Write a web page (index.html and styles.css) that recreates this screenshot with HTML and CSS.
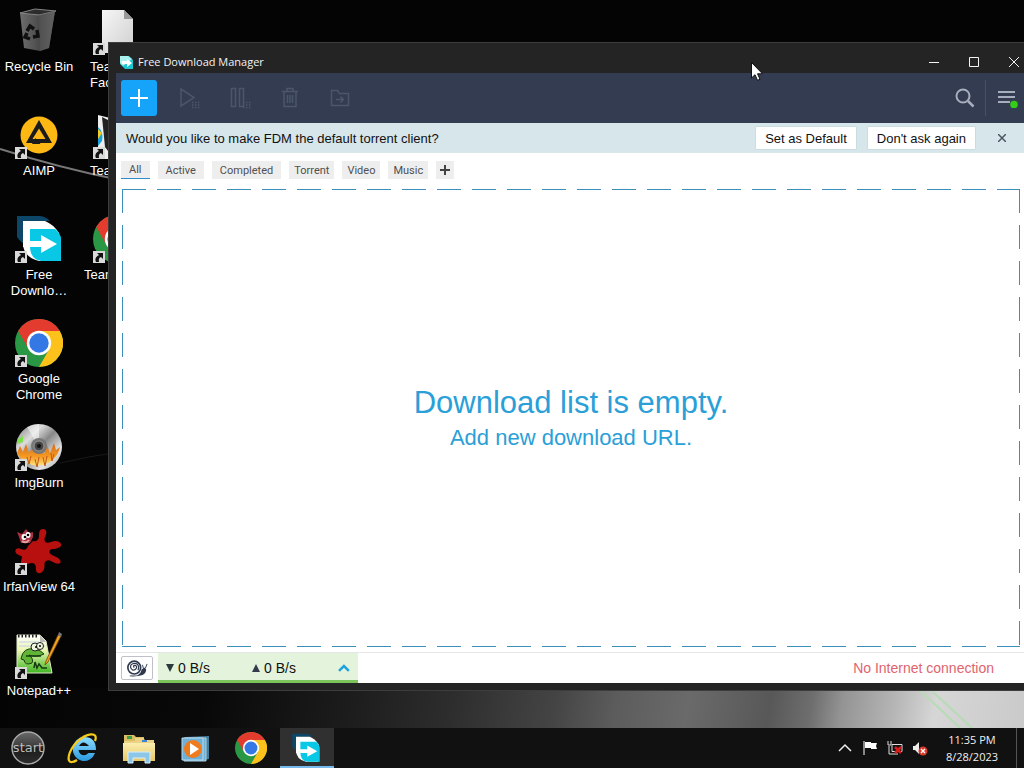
FILE: index.html
```html
<!DOCTYPE html>
<html lang="en">
<head>
<meta charset="utf-8">
<meta name="viewport" content="width=device-width, initial-scale=1">
<title>Free Download Manager</title>
<link rel="stylesheet" href="styles.css">
</head>
<body>
<svg class="defs" aria-hidden="true">
  <defs>
    <linearGradient id="g-bin" x1="0" y1="0" x2="1" y2="0"><stop offset="0" stop-color="#6e6e6e"/><stop offset=".55" stop-color="#4a4a4a"/><stop offset="1" stop-color="#767676"/></linearGradient>
    <linearGradient id="g-file" x1="0" y1="0" x2="1" y2="1"><stop offset="0" stop-color="#f6f6f6"/><stop offset="1" stop-color="#cfcfcf"/></linearGradient>
    <linearGradient id="g-disc" x1="0" y1="0" x2="1" y2="1"><stop offset="0" stop-color="#777"/><stop offset=".3" stop-color="#ddd"/><stop offset=".5" stop-color="#888"/><stop offset=".75" stop-color="#e4e4e4"/><stop offset="1" stop-color="#999"/></linearGradient>
    <linearGradient id="g-fire" x1="0" y1="0" x2="0" y2="1"><stop offset="0" stop-color="#d2691e"/><stop offset=".6" stop-color="#f59a22"/><stop offset="1" stop-color="#ffe27a"/></linearGradient>
    <linearGradient id="g-note" x1="0" y1="0" x2="0" y2="1"><stop offset="0" stop-color="#fff"/><stop offset=".4" stop-color="#eaf6b0"/><stop offset="1" stop-color="#3fb522"/></linearGradient>
    <linearGradient id="g-ie" x1="0" y1="0" x2="0" y2="1"><stop offset="0" stop-color="#8fdcff"/><stop offset="1" stop-color="#2a9be0"/></linearGradient>
    <linearGradient id="g-folder" x1="0" y1="0" x2="0" y2="1"><stop offset="0" stop-color="#fbeeb0"/><stop offset="1" stop-color="#e6c765"/></linearGradient>
    <linearGradient id="g-start" x1="0" y1="0" x2="0" y2="1"><stop offset="0" stop-color="#6a6a6a"/><stop offset=".45" stop-color="#3c3c3c"/><stop offset=".5" stop-color="#1c1c1c"/><stop offset="1" stop-color="#2c2c2c"/></linearGradient>
    <symbol id="shortcut" viewBox="0 0 12 12"><rect width="12" height="12" fill="#d9d9d9"/><path d="M4 2h6v6L8 6C6 7 5.500 8 6 11H3C1.500 8 3 5.500 6 4z" fill="#111"/></symbol>
    <symbol id="fdm" viewBox="0 0 48 48">
      <path d="M2 1h22q6 0 11 5H12v24q-5-1-10-8z" fill="#0c4668"/>
      <path d="M8 6h22q8 3 14 12v28H24Q8 42 8 28z" fill="#fff"/>
      <path d="M15 14h25q6 5 6 10v22H26q-11-2-11-15z" fill="#08c8e6"/>
      <path d="M8 26h18v-6l16 9-16 9v-6H8z" fill="#fff"/>
    </symbol>
    <symbol id="chrome" viewBox="0 0 48 48">
      <circle cx="24" cy="24" r="24" fill="#2a9745"/>
      <path d="M3.200 12A24 24 0 0 1 44.800 12H24L13.600 30z" fill="#e33b2e"/>
      <path d="M44.800 12A24 24 0 0 1 24 48L34.400 30 24 12z" fill="#fcc21b"/>
      <circle cx="24" cy="24" r="12.200" fill="#fff"/><circle cx="24" cy="24" r="9.700" fill="#3478e5"/>
    </symbol>
  </defs>
</svg>

<main class="desktop">
  <svg class="wallpaper" viewBox="0 0 1024 728" preserveAspectRatio="none" aria-hidden="true">
    <path d="M0 149Q60 168 120 180" fill="none" stroke="#777" stroke-width="2"/>
    <path d="M60 463Q90 456 120 452" fill="none" stroke="#181818"/>
    <path d="M921 691L960 728M932 691L972 728" stroke="#b7dcb5" stroke-width="2"/>
  </svg>

  <nav class="icons" aria-label="Desktop">
    <a class="icon" href="#bin">
      <svg viewBox="0 0 48 48"><path d="M5 6l35-2-6 37-9 3-16-3z" fill="url(#g-bin)"/><path d="M5 6l15-4 21 2-17 4z" fill="#2d2d2d" stroke="#858585"/><path d="M24 8l1 36 9-3 6-37z" fill="#555" opacity=".6"/><g fill="none" stroke="#111" stroke-width="3.500"><path d="M12 24l3-5 4 3"/><path d="M22 23l1 6-5 1"/><path d="M15 32l-5-2 2-4"/></g></svg>
      <span>Recycle Bin</span>
    </a>
    <a class="icon" href="#aimp">
      <svg viewBox="0 0 48 48"><circle cx="24" cy="24" r="18.500" fill="#fdb813"/><path fill-rule="evenodd" d="M24 9l13 23H11zm0 8.500l-6.500 10.500H22l4 0h4.500z" fill="#1b1b1b"/><path d="M17 33l3.500-6 5 6z" fill="#1b1b1b"/><use href="#shortcut" y="36" width="12" height="12"/></svg>
      <span>AIMP</span>
    </a>
    <a class="icon" href="#fdm-app">
      <svg viewBox="0 0 48 48"><use href="#fdm" width="48" height="48"/><use href="#shortcut" y="36" width="12" height="12"/></svg>
      <span>Free<br>Downlo…</span>
    </a>
    <a class="icon" href="#chrome-app">
      <svg viewBox="0 0 48 48"><use href="#chrome" width="48" height="48"/><use href="#shortcut" y="36" width="12" height="12"/></svg>
      <span>Google<br>Chrome</span>
    </a>
    <a class="icon" href="#imgburn">
      <svg viewBox="0 0 48 48"><circle cx="24" cy="24" r="23" fill="url(#g-disc)"/><path d="M24 24L12 4A23 23 0 0 1 24 1z" fill="#fff" opacity=".5"/><path d="M2 17l6-4v6l-6 2z" fill="#7be04a"/><path d="M2 30l3-7 3 6 3-8 3 9 4-6 3 7 4-8 4 8 3-9 3 8 4-10 2 7 4-3A23 23 0 0 1 2 30z" fill="url(#g-fire)"/><path d="M12 34l2 7 2-8M20 36l2 8 2-10M28 34l2 9 2-10M36 30l1 8 2-7" fill="none" stroke="#c0561a"/><circle cx="24" cy="23" r="8" fill="#777"/><circle cx="24" cy="23" r="5" fill="#444" stroke="#999"/><circle cx="24" cy="23" r="2" fill="#111"/><use href="#shortcut" y="36" width="12" height="12"/></svg>
      <span>ImgBurn</span>
    </a>
    <a class="icon" href="#irfanview">
      <svg viewBox="0 0 48 48"><path d="M18 14q5 1 6-4c0-4 0-8 4-8s4 4 2 8c-2 5 2 7 6 5s9-1 10 2-4 5-8 5-5 4-1 6 6 2 8 5-1 5-5 3-6-4-9-2 0 6-3 10-7 2-7-1 0-7-4-7-5 3-9 2-1-6-1-8-4-1-6-4 1-6 5-4 6 0 7-3z" fill="#b80f0f"/><path d="M2 5l5 2 4-5 3 4 4-1v5l-3 6H6L4 10z" fill="#a83040"/><ellipse cx="9" cy="10" rx="2.500" ry="3" fill="#fff"/><ellipse cx="13" cy="8" rx="2.500" ry="3" fill="#fff"/><circle cx="10" cy="10" r="1.300"/><circle cx="13" cy="8" r="1.300"/><path d="M7 14q4 3 7-1" stroke="#e8a0a0" stroke-width="2" fill="none"/><use href="#shortcut" y="36" width="12" height="12"/></svg>
      <span>IrfanView 64</span>
    </a>
    <a class="icon" href="#notepad">
      <svg viewBox="0 0 48 48"><path d="M2 4h23l6 6 6 32H2z" fill="url(#g-note)" stroke="#dfe8c8"/><path d="M3 5h21" stroke="#222" stroke-width="3" stroke-dasharray="1.500 2"/><path d="M25 4v7h6z" fill="#bbb"/><path d="M4 11h20M4 15h26" stroke="#c4cfe8"/><path d="M6 28q2-12 13-10 7 1 10 5-8 4-15 1 5 4 3 8-7 3-8-3z" fill="#62b436" stroke="#183f12"/><circle cx="20" cy="16" r="4" fill="#eef7dd" stroke="#222"/><circle cx="25" cy="15" r="3.500" fill="#eef7dd" stroke="#222"/><circle cx="21" cy="16" r="1"/><circle cx="25" cy="15" r="1"/><path d="M11 25h15M19 37l1-6 2 6 2-4 3 4h5" fill="none" stroke="#153c10" stroke-width="1.500"/><path d="M43 4l3 1-13 26-3 3 1-4z" fill="#eba51e" stroke="#7c430a" stroke-width=".8"/><path d="M44 1l3 2-1 3-3-2z" fill="#777"/><use href="#shortcut" y="36" width="12" height="12"/></svg>
      <span>Notepad++</span>
    </a>
    <a class="icon second" href="#file-1">
      <svg viewBox="0 0 48 48"><path d="M9 3h22l9 9v34H9z" fill="url(#g-file)"/><path d="M31 3v9h9z" fill="#999"/><use href="#shortcut" y="36" width="12" height="12"/></svg>
      <span>Tea<br>Fac</span>
    </a>
    <a class="icon second" href="#file-2">
      <svg viewBox="0 0 48 48"><path d="M5 4l16 4v40H5z" fill="#eee"/><path d="M9 6l12 6v36l-9-12z" fill="#222"/><path d="M5 16q6 5 4 14l-4 5z" fill="#19a5dc"/><path d="M5 18l4 4-4 6z" fill="#f4ce28"/><use href="#shortcut" y="36" width="12" height="12"/></svg>
      <span>Tea</span>
    </a>
    <a class="icon second long" href="#file-3">
      <svg viewBox="0 0 48 48"><use href="#chrome" width="48" height="48"/><use href="#shortcut" y="36" width="12" height="12"/></svg>
      <span>Team</span>
    </a>
  </nav>

  <section class="window" aria-label="Free Download Manager">
    <header class="titlebar">
      <svg class="appicon" viewBox="0 0 14 14"><path d="M0 1h9l4 4v9H5L0 9z" fill="#1fc6cf"/><path d="M0 1h8l4 3-9 7-3-3z" fill="#a8f1ee"/><path d="M2 6h5V4l5 4-5 4V9H2z" fill="#fff"/></svg>
      <h1>Free Download Manager</h1>
      <div class="controls">
        <button aria-label="Minimize"><svg viewBox="0 0 12 12"><path d="M1 6.500h10" /></svg></button>
        <button aria-label="Maximize"><svg viewBox="0 0 12 12"><path d="M1.500 1.500h9v9h-9z"/></svg></button>
        <button aria-label="Close"><svg viewBox="0 0 12 12"><path d="M1 1l10 10M11 1L1 11"/></svg></button>
      </div>
    </header>

    <div class="client">
      <div class="toolbar">
        <button class="add" aria-label="Add download"><svg viewBox="0 0 18 18"><path d="M9 0v18M0 9h18" stroke="#fff" stroke-width="2"/></svg></button>
        <div class="actions">
          <button aria-label="Start all"><svg viewBox="0 0 22 22"><path d="M2 2l13 8.500L2 19z"/><path d="M13 15.500h8M13 18h8M13 20.500h8" stroke-width="1.500" stroke-dasharray="1.500 1.500"/></svg></button>
          <button aria-label="Pause all"><svg viewBox="0 0 22 22"><path d="M2.500 1.500h4v18h-4zM10.500 1.500h4v18h-4z"/><path d="M14 15.500h8M14 18h8M14 20.500h8" stroke-width="1.500" stroke-dasharray="1.500 1.500"/></svg></button>
          <button aria-label="Delete"><svg viewBox="0 0 22 22"><path d="M3 4.500h16M8 4V1.500h6V4M5 5v14.500h12V5M8.500 8v8M11 8v8M13.500 8v8"/></svg></button>
          <button aria-label="Move to folder"><svg viewBox="0 0 22 22"><path d="M2.500 3.500h6l2 3h9v12h-17zM7 12.500h7M11.500 9.500l3 3-3 3"/></svg></button>
        </div>
        <button class="search" aria-label="Search"><svg viewBox="0 0 20 20"><circle cx="8" cy="8" r="6.500"/><path d="M13 13l5.500 5.500" stroke-width="2.500"/></svg></button>
        <button class="menu" aria-label="Menu"><svg viewBox="0 0 20 20"><path d="M0 4h17M0 9h17M0 14h12"/><circle cx="16" cy="16.500" r="3.800" fill="#34cb19" stroke="none"/></svg></button>
      </div>

      <div class="banner">
        <p>Would you like to make FDM the default torrent client?</p>
        <button class="choice">Set as Default</button>
        <button class="choice">Don't ask again</button>
        <button class="dismiss" aria-label="Close message"><svg viewBox="0 0 8 8"><path d="M0 0l8 8M8 0L0 8"/></svg></button>
      </div>

      <nav class="filters" aria-label="Filters">
        <button class="state on">All</button>
        <button class="state">Active</button>
        <button class="state">Completed</button>
        <button>Torrent</button>
        <button>Video</button>
        <button>Music</button>
        <button class="plus" aria-label="Add filter"><svg viewBox="0 0 10 10"><path d="M5 0v10M0 5h10" stroke="#444" stroke-width="2"/></svg></button>
      </nav>

      <div class="dropzone">
        <h2>Download list is empty.</h2>
        <a href="#add">Add new download URL.</a>
      </div>

      <footer class="status">
        <button class="snail" aria-label="Snail mode"><svg viewBox="0 0 24 18"><path d="M4 17.500q9 .5 14-1.500 4-2 4-6l-2-2-3 2q-1 5-5 6.500H4z" fill="#30384e"/><path d="M19 9l-1-4M21 9l2-5" stroke="#30384e" fill="none"/><circle cx="9" cy="8" r="7" fill="none" stroke="#30384e" stroke-width="1.800"/><path d="M9 8q-1.500-1.500 0-2.500 3 0 2.500 3-1.500 3-4.500 2-3-2-1.500-5.500Q8 2.500 12 4q3 3 1 7" fill="none" stroke="#30384e" stroke-width="1.300"/></svg></button>
        <button class="speed" aria-label="Speed, down 0 B/s, up 0 B/s">
          <span><svg viewBox="0 0 8 8"><path d="M0 0h8L4 8z" fill="#2b3a3c"/></svg>0 B/s</span>
          <span><svg viewBox="0 0 8 8"><path d="M0 8h8L4 0z" fill="#343a4c"/></svg>0 B/s</span>
          <svg class="chev" viewBox="0 0 12 8"><path d="M1 7l5-5 5 5" fill="none" stroke="#1fa2e0" stroke-width="2.500"/></svg>
        </button>
        <p>No Internet connection</p>
      </footer>
    </div>
  </section>

  <svg class="cursor" viewBox="0 0 12 19" aria-hidden="true"><path d="M.5.5v15.500l3.500-3.300 2.500 5.600 2.500-1-2.500-5.500h5z" fill="#fff" stroke="#111"/></svg>
</main>

<footer class="taskbar">
  <button class="start" aria-label="Start"><svg viewBox="0 0 36 36"><circle cx="18" cy="18" r="16" fill="url(#g-start)" stroke="#a8a8a8" stroke-width="1.500"/><text x="18" y="22" text-anchor="middle">start</text></svg></button>
  <nav class="apps" aria-label="Taskbar">
    <button aria-label="Internet Explorer"><svg viewBox="0 0 32 32"><path d="M17 5a11.500 12 0 1 0 11 16h-6.500q-4 4-8 1-2-2-2-4H29Q29 5 17 5zm-5 9q4-7 10 0z" fill="url(#g-ie)" fill-rule="evenodd"/><path d="M28 9C32-1 19 1 10 10S-1 31 5 30q2 0 5-2" fill="none" stroke="#f4ca1c" stroke-width="2.200"/></svg></button>
    <button aria-label="File Explorer"><svg viewBox="0 0 32 32"><path d="M1 3h10l2 2h8v6H1z" fill="#d9bd63"/><path d="M4 4h5v3H4z" fill="#3b9e48"/><path d="M12 6h8l2 2h9v20H1V9h11z" fill="#ecd284"/><path d="M19 8h5v2h-5z" fill="#3e85d6"/><path d="M0 11h32v18H0z" fill="url(#g-folder)"/><path d="M5 31V20h22v11h-5v-5H10v5z" fill="#8dc6e6" stroke="#d6effa"/></svg></button>
    <button aria-label="Media Player"><svg viewBox="0 0 32 32"><path d="M6 5l24-1v23l-8 2z" fill="#487e9d"/><path d="M5 6h22v23H5z" fill="#75b2d0" stroke="#aad2e4"/><path d="M3 6h21v22H3z" fill="#6fb0d8" stroke="#b6dcf0"/><circle cx="14" cy="17" r="9" fill="#f07b1c"/><path d="M11 11l9 6-9 6z" fill="#fff"/></svg></button>
    <button aria-label="Google Chrome"><svg viewBox="0 0 32 32"><use href="#chrome" width="32" height="32"/></svg></button>
    <button class="running" aria-label="Free Download Manager"><svg viewBox="0 0 32 32"><use href="#fdm" y="2" width="30" height="30"/></svg></button>
  </nav>
  <div class="tray">
    <button aria-label="Show hidden icons"><svg viewBox="0 0 16 16"><path d="M2 11l6-6 6 6" fill="none" stroke="#eee" stroke-width="1.500"/></svg></button>
    <button aria-label="Action center"><svg viewBox="0 0 16 16"><path d="M2 1v14" stroke="#fff"/><path d="M3 2h6v1h6l-1 3 1 3H9V8H3z" fill="#fff"/></svg></button>
    <button aria-label="Network"><svg viewBox="0 0 16 16"><path d="M5 4.500h10v7H5zM2 6v8h9M1 1v4h3V1" fill="none" stroke="#ddd"/><path d="M8 7l6 6M14 7l-6 6" stroke="#d81b1b" stroke-width="2.500"/></svg></button>
    <button aria-label="Volume"><svg viewBox="0 0 16 16"><path d="M1 6h2l4-4v12l-4-4H1z" fill="#eee"/><circle cx="11" cy="11" r="4.500" fill="#d8392c"/><path d="M9 9l4 4M13 9l-4 4" stroke="#fff" stroke-width="1.300"/></svg></button>
  </div>
  <time class="clock">11:35 PM<br>8/28/2023</time>
  <button class="peek" aria-label="Show desktop"></button>
</footer>
</body>
</html>
```

FILE: styles.css
```css
* { box-sizing: border-box; }

body {
  margin: 0;
  min-height: 100vh;
  display: flex;
  flex-direction: column;
  background: #000;
  font-family: "Liberation Sans", Arial, sans-serif;
  font-size: 13px;
}

h1, h2, p { margin: 0; font-weight: normal; }

button {
  margin: 0;
  padding: 0;
  border: 0;
  background: none;
  color: inherit;
  font: inherit;
}

svg { display: block; }

.defs { position: absolute; width: 0; height: 0; }

/* Desktop */

.desktop {
  position: relative;
  flex: 1;
  overflow: hidden;
  background:
    linear-gradient(100deg, #040404 0%, #080808 20%, #1c1c1c 34%, #2d2d2d 44%, #444 54%, #5c5c5c 60%, #6a6a6a 67%, #585858 75%, #6e6e6e 79%, #949494 82%, #b5b5b5 87%, #d6d6d6 91%, #cacaca 100%) bottom / 100% 40px no-repeat,
    #040404;
}

.wallpaper { position: absolute; inset: 0; width: 100%; height: 100%; }

.icons {
  position: relative;
  display: grid;
  grid-auto-flow: column;
  grid-template-rows: repeat(7, 104px);
  grid-auto-columns: 78px;
  padding-top: 7px;
  margin-bottom: -7px;
}

.icon {
  display: flex;
  flex-direction: column;
  align-items: center;
  gap: 4px;
  color: #fff;
  line-height: 16px;
  text-align: center;
  text-decoration: none;
  white-space: nowrap;
}

.icon svg { width: 48px; height: 48px; }

.second span { align-self: flex-start; padding-left: 12px; text-align: left; }

.long span { padding-left: 6px; }

/* Window */

.window {
  position: absolute;
  inset: 42px 0 37px 108px;
  display: flex;
  flex-direction: column;
  padding: 0 0 7px 7px;
  background: #242424;
  border: solid #3d3d3d;
  border-width: 1px 0 1px 1px;
}

.titlebar {
  display: flex;
  align-items: center;
  height: 30px;
  padding: 7px 4px 0 4px;
  color: #f2f2f2;
  font-family: "Open Sans", "Noto Sans", sans-serif;
}

.titlebar h1 { flex: 1; padding-left: 4px; font-size: 11px; line-height: 16px; }

.appicon { width: 14px; height: 14px; }

.controls { display: flex; gap: 28px; }

.controls svg { width: 12px; height: 12px; fill: none; stroke: #f4f4f4; stroke-width: 1; }

.client {
  flex: 1;
  display: flex;
  flex-direction: column;
  background: #fff;
}

.toolbar {
  display: flex;
  align-items: center;
  height: 50px;
  padding: 0 6px 0 5px;
  background: #333c50;
}

.add {
  display: grid;
  place-items: center;
  width: 36px;
  height: 36px;
  border-radius: 3px;
  background: #16a4fa;
}

.add svg { width: 18px; height: 18px; }

.actions { flex: 1; display: flex; gap: 28px; padding-left: 22px; }

.actions svg { width: 22px; height: 22px; fill: none; stroke: #4b556b; stroke-width: 1.500; }

.search svg, .menu svg { width: 20px; height: 20px; fill: none; stroke: #a7aebd; stroke-width: 2; }

.menu { margin-left: 10px; padding: 8px 0 8px 12px; border-left: 1px solid #465066; }

.banner {
  display: flex;
  align-items: center;
  height: 30px;
  padding: 0 18px 0 10px;
  background: #d7e6eb;
  color: #111;
}

.banner p { flex: 1; }

.choice {
  height: 22px;
  margin-left: 12px;
  padding: 0 9px;
  background: #fff;
  box-shadow: 0 0 1px #8aa;
}

.dismiss { margin-left: 23px; }

.dismiss svg { width: 8px; height: 8px; stroke: #4c5560; stroke-width: 1.500; }

.filters {
  display: flex;
  gap: 8px;
  padding: 8px 5px;
  color: #505050;
  font-family: Roboto, sans-serif;
  font-size: 11px;
}

.filters button {
  height: 18px;
  padding: 0 5px;
  background: #eee;
}

.filters .state { padding: 0 8px; }

.filters .on { border-bottom: 1px solid #2e8fc8; }

.filters .plus { padding: 0 4px; }

.plus svg { width: 10px; height: 10px; }

.dropzone {
  --dash: #3b8fba 0 24px;
  flex: 1;
  display: flex;
  flex-direction: column;
  align-items: center;
  justify-content: center;
  gap: 4px;
  margin: 2px 4px 5px 6px;
  color: #2a9fd8;
  background:
    repeating-linear-gradient(90deg, var(--dash), #0000 24px 35px) top / 100% 1px no-repeat,
    repeating-linear-gradient(90deg, var(--dash), #0000 24px 35px) bottom / 100% 1px no-repeat,
    repeating-linear-gradient(180deg, var(--dash), #0000 24px 36px) left / 1px 100% no-repeat,
    repeating-linear-gradient(180deg, var(--dash), #0000 24px 36px) right / 1px 100% no-repeat;
}

.dropzone h2 { font-size: 31px; line-height: 36px; }

.dropzone a { color: inherit; font-size: 22px; line-height: 26px; text-decoration: none; }

.status {
  display: flex;
  align-items: center;
  height: 31px;
  border-top: 1px solid #e6e6e6;
  padding: 0 30px 0 5px;
  font-size: 14px;
}

.snail {
  display: grid;
  place-items: center;
  width: 32px;
  height: 24px;
  border: 1px solid #c0c0c8;
  border-radius: 2px;
}

.snail svg { width: 22px; height: 17px; }

.speed {
  display: flex;
  align-items: center;
  align-self: stretch;
  width: 200px;
  margin-left: 5px;
  padding: 2px 8px 0;
  border-bottom: 3px solid #7cc55c;
  background: #e4f4dc;
  color: #111;
}

.speed span { display: flex; align-items: center; gap: 4px; width: 87px; }

.speed span svg { width: 8px; height: 8px; }

.speed .chev { width: 12px; height: 8px; margin-left: auto; }

.status p { margin-left: auto; color: #e0646e; }

.cursor { position: absolute; left: 751px; top: 62px; width: 12px; height: 19px; }

/* Taskbar */

.taskbar {
  display: flex;
  align-items: center;
  height: 40px;
  background: #111;
  color: #f0f0f0;
}

.start { width: 56px; display: grid; place-items: center; }

.start svg { width: 36px; height: 36px; }

.start text { fill: #bbb; font-size: 13px; font-family: "DejaVu Sans", sans-serif; }

.apps { flex: 1; display: flex; align-self: stretch; gap: 2px; }

.apps button { display: grid; place-items: center; width: 54px; }

.apps svg { width: 32px; height: 32px; }

.apps .running { background: #303030; border-bottom: 2px solid #76b9ed; }

.tray { display: flex; gap: 9px; }

.tray svg { width: 16px; height: 16px; }

.clock {
  width: 88px;
  font: 11px/17px "Open Sans", "Noto Sans", sans-serif;
  text-align: center;
}

.peek { align-self: stretch; width: 8px; border-left: 1px solid #555; }
```
